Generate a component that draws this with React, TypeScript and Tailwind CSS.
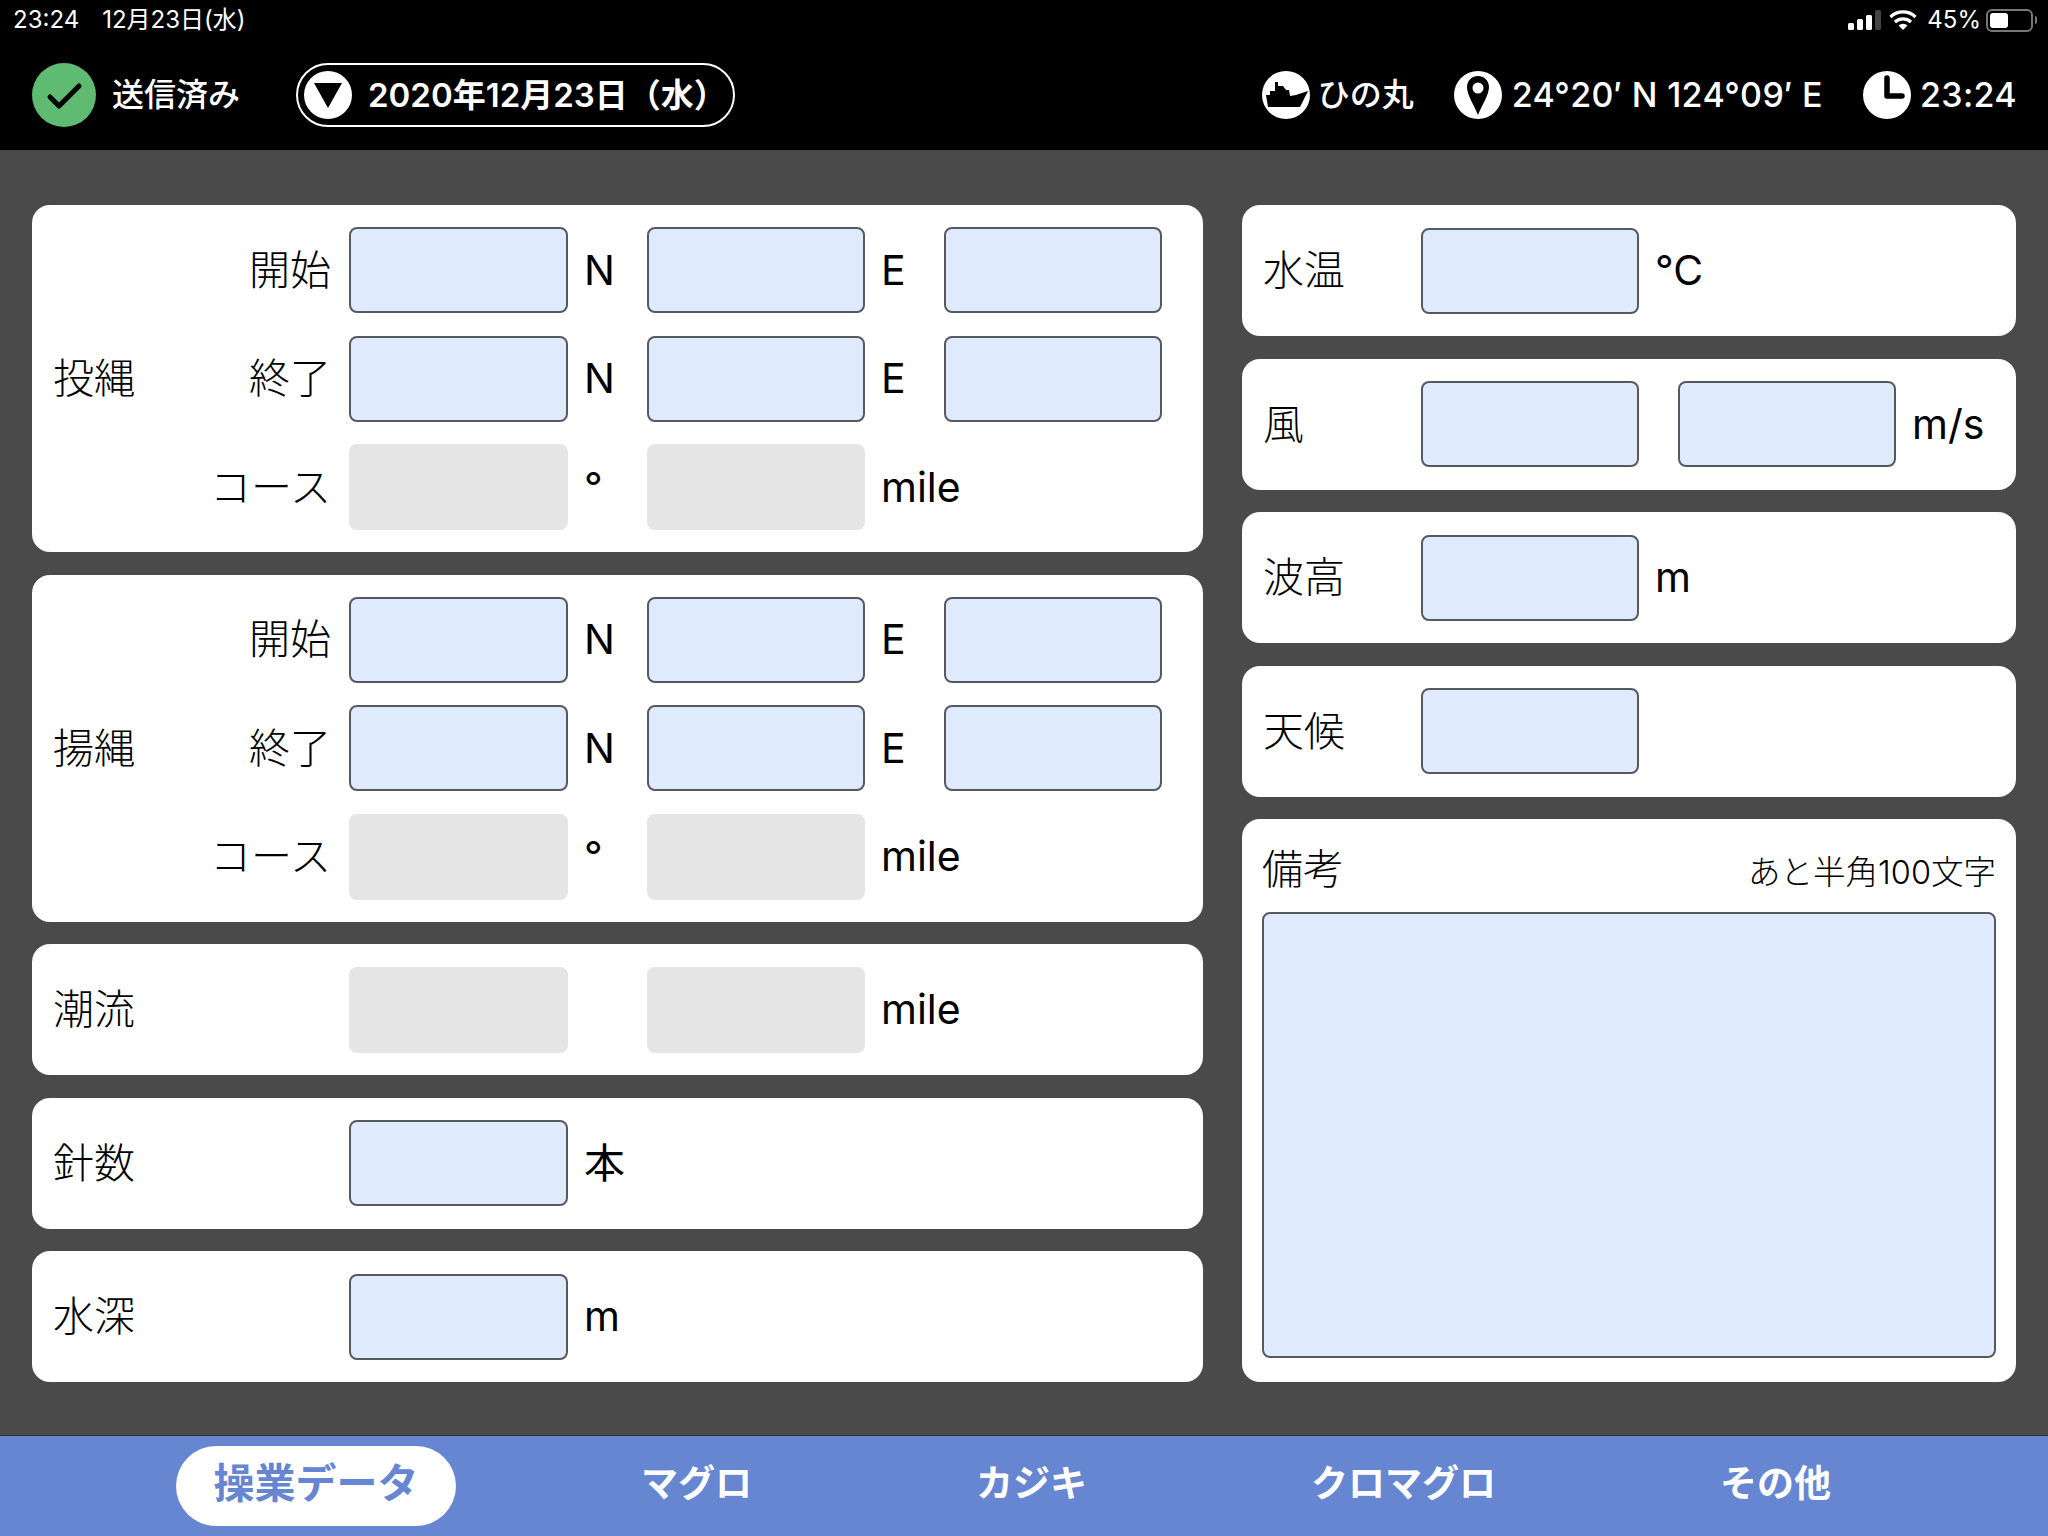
const cjk = "font-['Inter','Noto_Sans_CJK_JP',sans-serif]";

const Field = ({ off, narrow }: { off?: boolean; narrow?: boolean }) => {
  const size = narrow ? 'h-[86px] w-[218px] shrink-0 rounded-lg' : 'h-[86px] w-[219px] shrink-0 rounded-lg';
  return <div className={off ? `${size} bg-[#e5e5e5]` : `${size} border-2 border-[#555a60] bg-[#dfebfc]`} />;
};

// unit text that sits right of a field
const Unit = ({ children }: { children?: string }) => (
  <div className="w-[79px] shrink-0 pl-[16px] text-[41px] leading-none">{children}</div>
);

const Label = ({ children, className }: { children: string; className: string }) => (
  <div className={`${className} text-[41px] font-light leading-none`}>{children}</div>
);

const Row = ({ label, cells }: { label: string; cells: [string, string?] }) => (
  <div className="flex h-[86px] items-center">
    <Label className="mr-[18px] w-[178px] text-right">{label}</Label>
    <Field off={!cells[1]} />
    <Unit>{cells[0]}</Unit>
    <Field off={!cells[1]} narrow />
    <Unit>{cells[1] ?? 'mile'}</Unit>
    {cells[1] && <Field narrow />}
  </div>
);

const LineBlock = ({ title }: { title: string }) => (
  <section className="flex h-[347px] items-center rounded-[18px] bg-white pl-[21px]">
    <Label className="w-[100px]">{title}</Label>
    <div className="flex flex-col gap-[22.5px]">
      <Row label="開始" cells={['N', 'E']} />
      <Row label="終了" cells={['N', 'E']} />
      <Row label="コース" cells={['°']} />
    </div>
  </section>
);

const SmallCard = ({ title, children }: { title: string; children: React.ReactNode }) => (
  <section className="flex h-[131px] items-center rounded-[18px] bg-white pl-[21px]">
    <Label className="w-[296px] shrink-0">{title}</Label>
    {children}
  </section>
);

const WeatherCard = ({ title, children }: { title: string; children?: React.ReactNode }) => (
  <section className="flex h-[131px] items-center rounded-[18px] bg-white pl-[21px]">
    <Label className="w-[158px] shrink-0">{title}</Label>
    {children}
  </section>
);

const ShipIcon = () => (
  <svg viewBox="0 0 48 48" className="h-12 w-12">
    <circle cx="24" cy="24" r="24" fill="#fff" />
    <path d="M13 11h3v4h5l3 4h3l1 6 6-1 12-4-8 16H6L4 24h4v-4h5z" fill="#000" />
  </svg>
);

const PinIcon = () => (
  <svg viewBox="0 0 48 48" className="h-12 w-12">
    <circle cx="24" cy="24" r="24" fill="#fff" />
    <path
      fillRule="evenodd"
      d="M24 5c-6.100 0-11 4.900-11 11 0 8 7 18 11 28 4-10 11-20 11-28 0-6.100-4.900-11-11-11zm0 6.500a5.500 5.500 0 1 1 0 11 5.500 5.500 0 0 1 0-11z"
      fill="#000"
    />
  </svg>
);

const ClockIcon = () => (
  <svg viewBox="0 0 48 48" className="h-12 w-12">
    <circle cx="24" cy="24" r="24" fill="#fff" />
    <path d="M24 7v18h15" fill="none" stroke="#000" strokeWidth="5.500" strokeLinecap="round" strokeLinejoin="round" />
  </svg>
);

const StatusIcons = () => (
  <div className="flex items-center">
    <svg viewBox="0 0 34 20" className="h-[20px] w-[34px]">
      <rect x="0" y="13" width="6" height="7" rx="1.500" fill="#fff" />
      <rect x="9" y="9" width="6" height="11" rx="1.500" fill="#fff" />
      <rect x="18" y="5" width="6" height="15" rx="1.500" fill="#fff" />
      <rect x="27" y="0" width="6" height="20" rx="1.500" fill="#444" />
    </svg>
    <svg viewBox="0 0 28 20" className="ml-[7px] h-[20px] w-[28px]">
      <path d="M1.500 7a18 18 0 0 1 25 0" fill="none" stroke="#fff" strokeWidth="3.200" />
      <path d="M6 12a12 12 0 0 1 16 0" fill="none" stroke="#fff" strokeWidth="3.200" />
      <path d="M9.500 15.500a6.500 6.500 0 0 1 9 0L14 20z" fill="#fff" />
    </svg>
    <span className="ml-[10px] text-[24px] leading-none">45%</span>
    <div className="ml-[5px] flex h-[23px] w-[47px] items-center rounded-[6px] border-2 border-[#777] p-[2px]">
      <div className="h-full w-[18px] rounded-[3px] bg-white" />
    </div>
    <div className="ml-[2px] h-[8px] w-[2px] rounded-r bg-[#777]" />
  </div>
);

const tabs = ['マグロ', 'カジキ', 'クロマグロ', 'その他'];

export default function App() {
  return (
    <div className={`flex h-[1536px] w-[2048px] flex-col overflow-hidden bg-[#4a4a4a] text-black ${cjk}`}>
      <header className="h-[150px] shrink-0 bg-black text-white">
        <div className="flex h-[40px] items-center justify-between pl-[13px] pr-[11px] text-[24px] leading-none">
          <div className="flex gap-[23px]">
            <span>23:24</span>
            <span>12月23日(水)</span>
          </div>
          <StatusIcons />
        </div>
        <div className="mt-[23px] flex h-[64px] items-center pl-[32px] pr-[31px]">
          <div className="flex h-16 w-16 items-center justify-center rounded-full bg-[#5fbb72]">
            <svg viewBox="0 0 64 64" className="h-16 w-16">
              <path d="M18 34l9 9 20-20" fill="none" stroke="#000" strokeWidth="5" strokeLinecap="round" strokeLinejoin="round" />
            </svg>
          </div>
          <div className="ml-[16px] text-[32px] font-medium leading-none">送信済み</div>
          <div className="ml-[56px] flex h-[64px] w-[439px] items-center rounded-full border-2 border-white pl-[6px]">
            <svg viewBox="0 0 48 48" className="h-12 w-12">
              <circle cx="24" cy="24" r="24" fill="#fff" />
              <path d="M10 12h28L24 37z" fill="#000" />
            </svg>
            <span className="ml-[16px] text-[33px] font-semibold leading-none">2020年12月23日（水）</span>
          </div>
          <div className="ml-auto flex items-center">
            <ShipIcon />
            <span className="ml-[8px] text-[32px] font-medium leading-none">ひの丸</span>
            <div className="ml-[40px]"><PinIcon /></div>
            <span className="ml-[10px] text-[34px] font-medium leading-none tracking-[0.35px]">24°20′ N 124°09′ E</span>
            <div className="ml-[40px]"><ClockIcon /></div>
            <span className="ml-[9px] text-[34px] font-medium leading-none tracking-[0.35px]">23:24</span>
          </div>
        </div>
      </header>

      <main className="flex flex-1 gap-[39px] px-[32px] pt-[55px]">
        <div className="flex h-[1177px] w-[1171px] shrink-0 flex-col justify-between">
          <LineBlock title="投縄" />
          <LineBlock title="揚縄" />
          <SmallCard title="潮流">
            <Field off />
            <Unit />
            <Field off narrow />
            <Unit>mile</Unit>
          </SmallCard>
          <SmallCard title="針数">
            <Field />
            <Unit>本</Unit>
          </SmallCard>
          <SmallCard title="水深">
            <Field />
            <Unit>m</Unit>
          </SmallCard>
        </div>

        <div className="flex h-[1177px] w-[774px] shrink-0 flex-col justify-between">
          <WeatherCard title="水温">
            <Field narrow />
            <Unit>℃</Unit>
          </WeatherCard>
          <WeatherCard title="風">
            <Field narrow />
            <div className="w-[39px] shrink-0" />
            <Field narrow />
            <Unit>m/s</Unit>
          </WeatherCard>
          <WeatherCard title="波高">
            <Field narrow />
            <Unit>m</Unit>
          </WeatherCard>
          <WeatherCard title="天候">
            <Field narrow />
          </WeatherCard>
          <section className="flex h-[563px] flex-col rounded-[18px] bg-white px-[20px]">
            <div className="flex h-[93px] items-center justify-between pt-[8px]">
              <span className="text-[41px] font-light leading-none">備考</span>
              <span className="mt-[8px] text-[32.5px] font-light leading-none">あと半角100文字</span>
            </div>
            <div className="h-[446px] rounded-lg border-2 border-[#555a60] bg-[#dfebfc]" />
          </section>
        </div>
      </main>

      <nav className="flex h-[101px] shrink-0 items-center gap-[224px] border-t border-[#333] bg-[#6686d1] pl-[176px] text-[37px] font-bold leading-none text-white">
        <div className="mr-[-39px] flex h-[80px] w-[280px] items-center justify-center rounded-[40px] bg-white pb-[5px] text-[41px] text-[#6686d1]">
          操業データ
        </div>
        {tabs.map(tab => (
          <div key={tab} className="pb-[6px]">{tab}</div>
        ))}
      </nav>
    </div>
  );
}
